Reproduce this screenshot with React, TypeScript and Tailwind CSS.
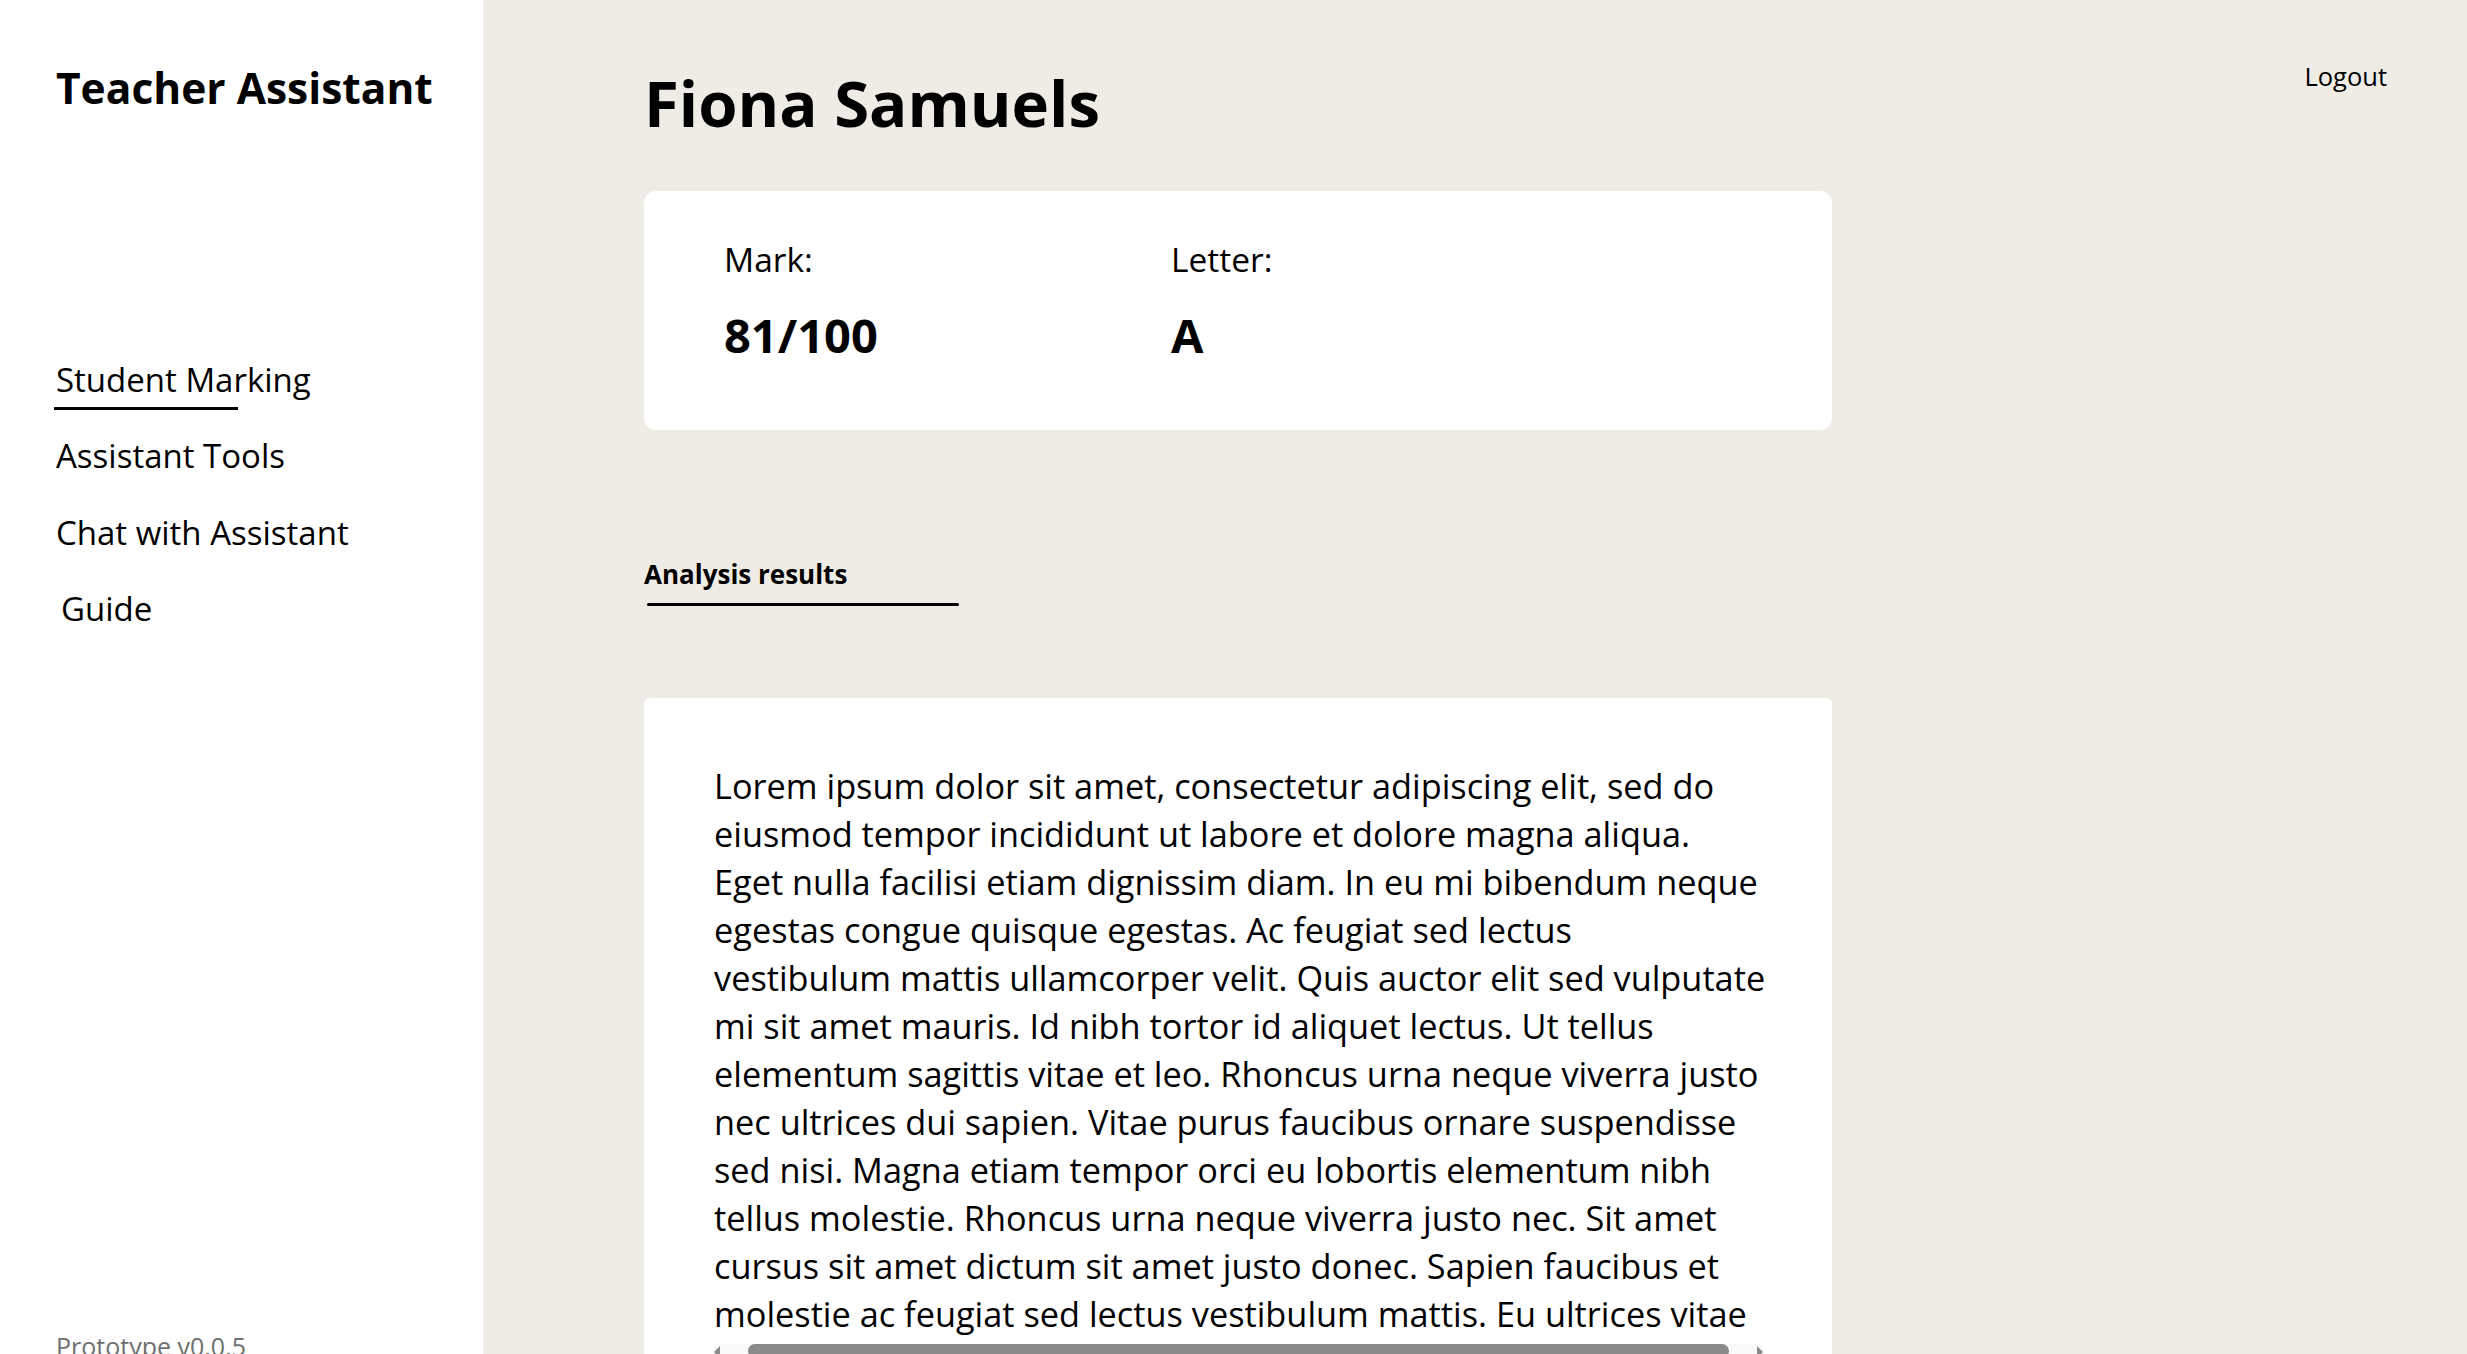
const navItems = ["Student Marking", "Assistant Tools", "Chat with Assistant", "Guide"];

const analysisLines = [
  "Lorem ipsum dolor sit amet, consectetur adipiscing elit, sed do",
  "eiusmod tempor incididunt ut labore et dolore magna aliqua.",
  "Eget nulla facilisi etiam dignissim diam. In eu mi bibendum neque",
  "egestas congue quisque egestas. Ac feugiat sed lectus",
  "vestibulum mattis ullamcorper velit. Quis auctor elit sed vulputate",
  "mi sit amet mauris. Id nibh tortor id aliquet lectus. Ut tellus",
  "elementum sagittis vitae et leo. Rhoncus urna neque viverra justo",
  "nec ultrices dui sapien. Vitae purus faucibus ornare suspendisse",
  "sed nisi. Magna etiam tempor orci eu lobortis elementum nibh",
  "tellus molestie. Rhoncus urna neque viverra justo nec. Sit amet",
  "cursus sit amet dictum sit amet justo donec. Sapien faucibus et",
  "molestie ac feugiat sed lectus vestibulum mattis. Eu ultrices vitae",
];

const Sidebar = () => {
  return (
    <aside className="w-[483px] shrink-0 bg-white flex flex-col h-full overflow-hidden pl-[56px]">
      <h1 className="mt-[67px] text-[42.5px] leading-[42.5px] font-bold text-black">Teacher Assistant</h1>

      {/* Nav */}
      <nav className="mt-[253px] flex flex-col gap-[43.5px]">
        {navItems.map((item, i) => (
          <div
            key={item}
            className={`relative text-[33px] leading-[33px] font-medium text-black ${item === "Guide" ? "pl-[5px]" : ""}`}
          >
            {item}
            {i === 0 && <div className="absolute left-[-2px] top-[44px] w-[184px] h-[3px] bg-black" />}
          </div>
        ))}
      </nav>

      <div className="mt-auto mb-[-5px] text-[25px] leading-[25px] text-[#6f6f6f]">Prototype v0.0.5</div>
    </aside>
  );
};

const MainContent = () => {
  return (
    <main className="flex-1 bg-[#efece6] flex h-full overflow-hidden pl-[161px]">
      <div className="w-[1188px] shrink-0 flex flex-col h-full">
        <h2 className="mt-[71px] text-[63.5px] leading-[64px] font-bold text-black">Fiona Samuels</h2>

        {/* Grade card */}
        <div className="mt-[56px] h-[239px] bg-white rounded-[12px] pl-[80px] pt-[51.5px] flex">
          <div className="w-[447px]">
            <div className="text-[33.5px] leading-[33.5px] text-black">Mark:</div>
            <div className="mt-[35.5px] text-[47px] leading-[47px] font-bold text-black">81/100</div>
          </div>
          <div>
            <div className="text-[33.5px] leading-[33.5px] text-black">Letter:</div>
            <div className="mt-[35.5px] text-[47px] leading-[47px] font-bold text-black">A</div>
          </div>
        </div>

        {/* Tab */}
        <div className="mt-[131px] text-[26px] leading-[26px] font-bold text-black">Analysis results</div>
        <div className="mt-[16px] ml-[3px] w-[312px] h-[3px] bg-black rounded-full" />

        {/* Analysis text */}
        <div className="mt-[92px] flex-1 bg-white rounded-t-[6px] pt-[64px] pl-[70px] pr-[60px] overflow-hidden">
          <div className="text-[34.3px] leading-[48px] text-black">
            {analysisLines.map((line) => (
              <div key={line} className="whitespace-nowrap">
                {line}
              </div>
            ))}
          </div>
          {/* horizontal scrollbar */}
          <div className="mt-[6px] w-[1049px] h-[18px] flex items-start gap-[6px] bg-[#fafafa]">
            <div className="w-0 h-0 mt-[2px] border-y-[6px] border-y-transparent border-r-[6px] border-r-[#8a8a8a]" />
            <div className="flex-1 mx-[22px] h-[14px] rounded-full bg-[#8a8a8a]" />
            <div className="w-0 h-0 mt-[2px] border-y-[6px] border-y-transparent border-l-[6px] border-l-[#8a8a8a]" />
          </div>
        </div>
      </div>

      <div className="flex-1 flex justify-end pr-[80px]">
        <button className="mt-[63.5px] h-[25.5px] text-[25.5px] leading-[25.5px] text-black">Logout</button>
      </div>
    </main>
  );
};

export default function App() {
  return (
    <div className="flex w-full h-[1354px] overflow-hidden font-['Open_Sans',sans-serif]">
      <Sidebar />
      <MainContent />
    </div>
  );
}
